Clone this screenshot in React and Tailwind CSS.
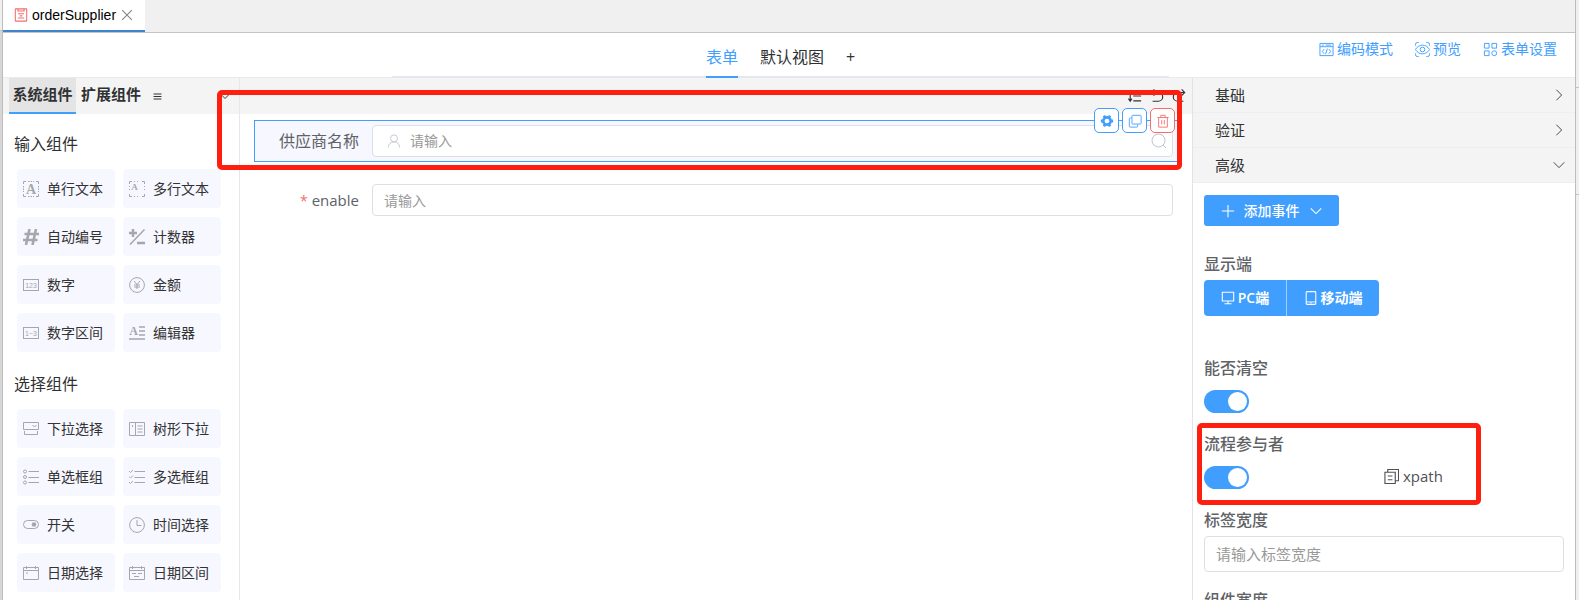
import { useState } from "react";

const FONT = "font-['Open_Sans','Noto_Sans_CJK_SC',sans-serif]";

const Svg = ({ size = 16, className = "", children }) => (
  <svg
    width={size}
    height={size}
    viewBox="0 0 16 16"
    fill="none"
    stroke="currentColor"
    strokeWidth="1"
    className={`shrink-0 ${className}`}
    aria-hidden="true"
  >
    {children}
  </svg>
);

const icons = {
  text: (
    <>
      <path d="M.5 3V.5H3M13 .5h2.5V3M15.500 13v2.500H13M3 15.500H.5V13" />
      <path d="M5 .5h6M5 15.500h6M.5 5v6M15.500 5v6" strokeDasharray="1.500 1" />
      <text x="8" y="13" textAnchor="middle" fontSize="14" fontWeight="bold" fontFamily="Liberation Serif" fill="currentColor" stroke="none">A</text>
    </>
  ),
  textarea: (
    <>
      <path d="M.5 3V.5H3M13 .5h2.500V3M15.500 13v2.500H13M3 15.500H.5V13" />
      <path d="M5 .5h6M5 15.500h6M.5 5v6M15.500 5v6" strokeDasharray="1 2" />
      <text x="5.500" y="9" textAnchor="middle" fontSize="9" fontWeight="bold" fontFamily="Liberation Serif" fill="currentColor" stroke="none">A</text>
    </>
  ),
  hash: <path d="M6.500 0 3 16M13 0 9.500 16M1.500 5H16M0 11h14.500" strokeWidth="2.600" />,
  counter: (
    <>
      <path d="M4 0v8M0 4h8M8 14h8" strokeWidth="2.400" />
      <path d="M15.500.5 1 15.500" strokeWidth="1.500" />
    </>
  ),
  number: (
    <>
      <rect x=".5" y="2.500" width="15" height="11" />
      <text x="8" y="10.500" textAnchor="middle" fontSize="7" fontFamily="Liberation Sans" fill="currentColor" stroke="none">123</text>
    </>
  ),
  range: (
    <>
      <rect x=".5" y="2.500" width="15" height="11" />
      <text x="8" y="10.500" textAnchor="middle" fontSize="7" fontFamily="Liberation Sans" fill="currentColor" stroke="none">1~3</text>
    </>
  ),
  money: (
    <>
      <circle cx="8" cy="8" r="7.400" />
      <path d="m5 4 3 3.500L11 4M5 8h6M5 10h6M8 7.500V12" />
    </>
  ),
  editor: (
    <>
      <text x="4.500" y="10" textAnchor="middle" fontSize="12" fontWeight="bold" fontFamily="Liberation Serif" fill="currentColor" stroke="none">A</text>
      <path d="M10 2h6M10 6h6M10 10h6M0 14h16" strokeWidth="1.500" />
    </>
  ),
  select: <path d="M.5 1.500h15v7H.5zM9.500 4l2 2 2-2M1.500 10v3.500h13V10" />,
  tree: <path d="M.5 1.500h15v13H.5zM6.500 1.500v13M8.500 5h5M8.500 8h5M8.500 11h5M3.500 4v2" />,
  radio: (
    <>
      <circle cx="2" cy="2.500" r="1.500" />
      <circle cx="2" cy="8" r="1.500" />
      <circle cx="2" cy="13.500" r="1.500" />
      <path d="M5.500 2.500H16M5.500 8.500H16M5.500 13.500H16" />
    </>
  ),
  check: <path d="m0 2 1.500 1.500L4 1M0 7.500 1.500 9 4 6.500M0 13l1.500 1.500L4 12M5.500 2.500H16M5.500 8.500H16M5.500 13.500H16" />,
  toggle: (
    <>
      <rect x=".5" y="3.500" width="15" height="8" rx="4" />
      <circle cx="11" cy="7.500" r="2.300" fill="currentColor" stroke="none" />
    </>
  ),
  clock: (
    <>
      <circle cx="8" cy="8" r="7.400" />
      <path d="M8 3v5.500h4.500" />
    </>
  ),
  date: <path d="M.5 2.500h15v12H.5zM.5 5.500h15M3.500 1v3M12.500 1v3M3 8h2" />,
  dateRange: <path d="M.5 2.500h15v12H.5zM.5 5.500h15M3.500 1v3M12.500 1v3M3 8.500h4M9 8.500h4M5 11.500h5" />,
};

const groups = [
  {
    title: "输入组件",
    items: [
      ["单行文本", "text"],
      ["多行文本", "textarea"],
      ["自动编号", "hash"],
      ["计数器", "counter"],
      ["数字", "number"],
      ["金额", "money"],
      ["数字区间", "range"],
      ["编辑器", "editor"],
    ],
  },
  {
    title: "选择组件",
    items: [
      ["下拉选择", "select"],
      ["树形下拉", "tree"],
      ["单选框组", "radio"],
      ["多选框组", "check"],
      ["开关", "toggle"],
      ["时间选择", "clock"],
      ["日期选择", "date"],
      ["日期区间", "dateRange"],
    ],
  },
];

const TabBar = () => (
  <div className="flex h-[33px] shrink-0 border-b border-[#c4c4c4] bg-[#f0f0f0]">
    <div className="flex items-center border-b-2 border-[#3d85cc] bg-white px-[11px] font-['Liberation_Sans',sans-serif] text-sm text-black">
      <Svg size={14} className="mr-1 text-[#f56c6c]">
        <path d="M2 1h12a.5.5 0 0 1 .5.500v13a.5.5 0 0 1-.5.500H2a.5.5 0 0 1-.5-.5v-13A.5.5 0 0 1 2 1zM4.500 1v2.500h7V1M4.500 6.500h7M6.500 9h3M4.500 11.500h7" strokeWidth="1.200" />
      </Svg>
      <a href="#order">orderSupplier</a>
      <button type="button" aria-label="close" className="ml-1 text-[#7c838c]">
        <Svg size={14}>
          <path d="m2.500 2.500 11 11M13.500 2.500l-11 11" strokeWidth="1.200" />
        </Svg>
      </button>
    </div>
  </div>
);

const HeaderLink = ({ label, children }) => (
  <a href="#action" className="flex items-center gap-[3px]">
    <Svg size={15}>{children}</Svg>
    {label}
  </a>
);

const Header = () => (
  <header className="flex h-[45px] shrink-0 border-b border-[#e8eaee] bg-white">
    <div className="w-[389px] shrink-0" />
    <nav className="-mb-px flex flex-1 justify-center border-b-2 border-[#e4e7ed] text-base text-[#303133]">
      <a href="#form" className="-mb-[2px] flex items-center border-b-2 border-[#409eff] pt-[5px] text-[#409eff]">
        表单
      </a>
      <a href="#view" className="ml-[22px] flex items-center pt-[5px]">
        默认视图
      </a>
      <button type="button" className="ml-[22px] pt-[5px]">
        +
      </button>
    </nav>
    <div className="flex w-[406px] shrink-0 items-start justify-end gap-[22px] pt-[6px] pr-[18px] text-sm text-[#409eff]">
      <HeaderLink label="编码模式">
        <path d="M1 1.500h14v13H1zM1 5h14M3 3.300h2M7 3.300h6M5.500 7.500l-2 2.500 2 2.500M10.500 7.500l2 2.500-2 2.500M9 7l-2 6" />
      </HeaderLink>
      <HeaderLink label="预览">
        <path d="M.5 4V2.500a2 2 0 0 1 2-2H4M12 .5h1.500a2 2 0 0 1 2 2V4M15.500 12v1.500a2 2 0 0 1-2 2H12M4 15.500H2.500a2 2 0 0 1-2-2V12" />
        <path d="M.5 8C4 1.800 12 1.800 15.500 8 12 14.200 4 14.200.5 8z" />
        <circle cx="8" cy="8" r="2.500" />
      </HeaderLink>
      <HeaderLink label="表单设置">
        <path d="M1.500 1.500h5v5h-5zM9.500 1.500h5v5h-5zM1.500 9.500h5v5h-5z" />
        <circle cx="12" cy="12" r="2.600" />
      </HeaderLink>
    </div>
  </header>
);

const Sidebar = () => (
  <aside className="w-[237px] shrink-0 border-r border-[#e4e7ed] bg-white">
    <div className="flex h-9 items-center bg-[#f4f4f4] pl-[6px] text-[15px] font-bold text-[#303133]">
      <button type="button" className="h-full w-[67px] border-b-2 border-[#409eff] bg-[#e4e4e4] pb-[2px]">
        系统组件
      </button>
      <button type="button" className="ml-[5px] pb-1">
        扩展组件
      </button>
      <Svg size={9} className="ml-3">
        <path d="M1 3.500h14M1 8h14M1 12.500h14" strokeWidth="2" />
      </Svg>
      <Svg size={10} className="mr-[9px] ml-auto">
        <path d="m2 6 6 6 6-6" strokeWidth="1.500" />
      </Svg>
    </div>
    <div className="pt-[7px] pr-[18px] pl-[14px]">
      {groups.map((group) => (
        <section key={group.title}>
          <h3 className="-ml-[3px] flex h-12 items-center pb-[2px] text-base text-[#303133]">
            {group.title}
          </h3>
          <div className="grid grid-cols-2 gap-x-2">
            {group.items.map(([label, icon]) => (
              <button
                key={label}
                type="button"
                className="mb-[9px] flex h-[39px] items-center gap-2 rounded bg-[#f6f7ff] pl-[6px] text-sm text-[#333]"
              >
                <Svg className="text-[#a6a7ab]">{icons[icon]}</Svg>
                {label}
              </button>
            ))}
          </div>
        </section>
      ))}
    </div>
  </aside>
);

const Canvas = () => (
  <main className="min-w-0 flex-1 bg-white">
    <div className="flex h-9 items-center justify-end gap-2 bg-[#f4f4f4] pr-[6px] text-[#303133]">
      <Svg size={14}>
        <path d="M6 2.500h9M6 8h9M6 13.500h9M2.500 3v10M.5 5l2-3 2 3M.5 11l2 3 2-3" strokeWidth="1.300" />
      </Svg>
      <Svg size={14}>
        <path d="M5 .5 1.500 4 5 7.500M2 4h7.500a5 5 0 0 1 0 10H3" strokeWidth="1.300" />
      </Svg>
      <Svg size={14}>
        <path d="M11 .5 14.500 4 11 7.500M14 4H6.500a5 5 0 0 0 0 10H13" strokeWidth="1.300" />
      </Svg>
    </div>

    <form className="flex flex-col gap-[17px] pt-[6px] pr-[13px] pl-[14px]">
      <div className="relative flex h-[42px] items-center border border-[#409eff] bg-[#f6f7ff] pr-[5px]">
        <label htmlFor="supplier" className="mr-[13px] w-[104px] text-right text-base text-[#606266]">
          供应商名称
        </label>
        <div className="flex h-8 flex-1 items-center rounded border border-[#dcdfe6] bg-white pr-[5px] pl-[14px] text-[#c0c4cc]">
          <Svg size={14} className="mr-2">
            <circle cx="8" cy="5" r="4" />
            <path d="M1.500 15.500C1.500 6.800 14.500 6.800 14.500 15.500" />
          </Svg>
          <input
            id="supplier"
            placeholder="请输入"
            className="min-w-0 flex-1 bg-transparent pl-px text-sm outline-none placeholder:text-[#999]"
          />
          <Svg size={16}>
            <circle cx="7.500" cy="7.500" r="6.500" />
            <path d="m12 12 3 3" />
          </Svg>
        </div>

        {/* row actions */}
        <div className="absolute -top-[13px] right-[3px] flex gap-[3px]">
          <button type="button" aria-label="settings" className="flex size-[25px] items-center justify-center rounded-[5px] border border-[#409eff] bg-white text-[#409eff]">
            <Svg size={14}>
              <circle cx="8" cy="8" r="4.200" strokeWidth="3" />
              <path d="M1 8h2M13 8h2M4.500 1.900l1 1.700M10.500 12.400l1 1.700M4.500 14.100l1-1.700M10.500 3.600l1-1.700" strokeWidth="3.200" />
            </Svg>
          </button>
          <button type="button" aria-label="copy" className="flex size-[25px] items-center justify-center rounded-[5px] border border-[#409eff] bg-white text-[#409eff]">
            <Svg size={14}>
              <rect x="4.500" y="1.500" width="10.500" height="10" rx="1" />
              <path d="M4 4.500H2.500a1 1 0 0 0-1 1v8.500a1 1 0 0 0 1 1H10a1 1 0 0 0 1-1V12" />
            </Svg>
          </button>
          <button type="button" aria-label="delete" className="flex size-[25px] items-center justify-center rounded-[5px] border border-[#f56c6c] bg-white text-[#f56c6c]">
            <Svg size={14}>
              <path d="M1.500 4h13M5.500 3.500V1.500h5v2M3 4v11h10V4M6.500 7v5M9.500 7v5" />
            </Svg>
          </button>
        </div>
        <div className="pointer-events-none absolute -top-[31px] -right-[4px] -bottom-[9px] -left-[38px] z-10 rounded-[5px] border-5 border-[#ff1f10]" />
      </div>

      <div className="flex h-[42px] items-center border border-transparent pr-[5px]">
        <label htmlFor="enable" className="mr-[13px] w-[104px] text-right text-[15px] text-[#606266]">
          <span className="mr-1 text-sm text-[#f56c6c]">*</span>
          enable
        </label>
        <input
          id="enable"
          placeholder="请输入"
          className="h-8 min-w-0 flex-1 rounded border border-[#dcdfe6] px-[11px] text-sm outline-none placeholder:text-[#999]"
        />
      </div>
    </form>
  </main>
);

const PanelTitle = ({ label, open }) => (
  <button
    type="button"
    className="flex h-[35px] w-full items-center justify-between border-b border-[#ebeef5] bg-[#f4f4f4] pr-[9px] pl-[22px] text-[15px] text-[#303133]"
  >
    {label}
    <Svg size={14}>
      {open ? <path d="m2 5 6 6 6-6" /> : <path d="m5 2 6 6-6 6" />}
    </Svg>
  </button>
);

const Switch = ({ id }) => {
  const [on, setOn] = useState(true);
  return (
    <label htmlFor={id} className="flex h-[23px] w-[45px] items-center rounded-full bg-[#dcdfe6] px-[2px] has-checked:justify-end has-checked:bg-[#409eff]">
      <input
        id={id}
        type="checkbox"
        role="switch"
        aria-label={id}
        checked={on}
        onChange={(e) => setOn(e.target.checked)}
        className="sr-only"
      />
      <span className="size-[19px] rounded-full bg-white" />
    </label>
  );
};

const fieldLabel = "flex h-8 items-center text-base font-medium text-[#606266]";

const Properties = () => (
  <aside className="w-[383px] shrink-0 overflow-hidden border-l border-[#e0e3e8] bg-white">
    <PanelTitle label="基础" />
    <PanelTitle label="验证" />
    <PanelTitle label="高级" open />

    <div className="px-[11px] pt-3">
      <button type="button" className="flex h-[31px] w-[135px] items-center justify-center gap-[9px] rounded-[3px] bg-[#409eff] text-sm font-medium text-white">
        <Svg size={14}>
          <path d="M8 1v14M1 8h14" strokeWidth="1.200" />
        </Svg>
        添加事件
        <Svg size={14}>
          <path d="m2 5 6 6 6-6" strokeWidth="1.200" />
        </Svg>
      </button>

      <div className="mt-[22px] mb-9">
        <div className={fieldLabel}>显示端</div>
        <div className="flex h-9 w-[175px] divide-x divide-[#a0cfff] overflow-hidden rounded bg-[#409eff] text-sm font-semibold text-white">
          <button type="button" className="flex w-[83px] items-center justify-center gap-[3px]">
            <Svg size={14}>
              <path d="M1.500 1.500h13v10h-13zM8 11.500v3M4 14.500h8" strokeWidth="1.200" />
            </Svg>
            PC端
          </button>
          <button type="button" className="flex flex-1 items-center justify-center gap-[3px]">
            <Svg size={14}>
              <rect x="2.500" y=".7" width="11" height="14.600" rx="1" strokeWidth="1.200" />
              <path d="M2.500 12.500h11M7 13.500h2" />
            </Svg>
            移动端
          </button>
        </div>
      </div>

      <div className="mb-[10px]">
        <div className={fieldLabel}>能否清空</div>
        <div className="flex h-[34px] items-center">
          <Switch id="clearable" />
        </div>
      </div>

      <div className="relative mb-[10px]">
        <div className={fieldLabel}>流程参与者</div>
        <div className="flex h-[34px] items-center">
          <Switch id="participant" />
          <button type="button" className="ml-[135px] flex items-center gap-1 pb-[2px] text-[15px] text-[#505256]">
            <Svg size={15}>
              <path d="M1 3.500h11v12H1zM4 3.500v-3h11.500v12H12M4 7.500h5M4 11.500h5" strokeWidth="1.200" />
            </Svg>
            xpath
          </button>
        </div>
        <div className="pointer-events-none absolute -top-[5px] -bottom-[11px] -left-[7px] w-[284px] rounded-[5px] border-5 border-[#ff1f10]" />
      </div>

      <div className="mb-3">
        <label htmlFor="label-width" className={fieldLabel}>
          标签宽度
        </label>
        <input
          id="label-width"
          placeholder="请输入标签宽度"
          className="h-9 w-full rounded border border-[#dcdfe6] px-[11px] text-[15px] outline-none placeholder:text-[#999]"
        />
      </div>

      <label htmlFor="field-width" className={fieldLabel}>
        组件宽度
      </label>
      <input id="field-width" className="h-9 w-full rounded border border-[#dcdfe6] px-[11px] text-[15px]" />
    </div>
  </aside>
);

const App = () => (
  <div className={`flex h-screen overflow-hidden bg-white ${FONT}`}>
    <div className="flex w-[3px] shrink-0 flex-col border-r border-[#bdbdbd] bg-[#d6d6d6]">
      <div className="h-[31px] border-b border-[#c4c4c4] bg-[#f0f0f0]" />
    </div>
    <div className="flex min-w-0 flex-1 flex-col">
      <TabBar />
      <Header />
      <div className="flex min-h-0 flex-1">
        <Sidebar />
        <Canvas />
        <Properties />
      </div>
    </div>
    <div className="flex w-1 shrink-0 flex-col border-l border-[#bdbdbd] bg-[#f0f0f0]">
      <div className="h-[88px] shrink-0 border-b border-[#c4c4c4]" />
      <div className="h-[107px] shrink-0 border-b border-[#c4c4c4]" />
    </div>
  </div>
);

export default App;
